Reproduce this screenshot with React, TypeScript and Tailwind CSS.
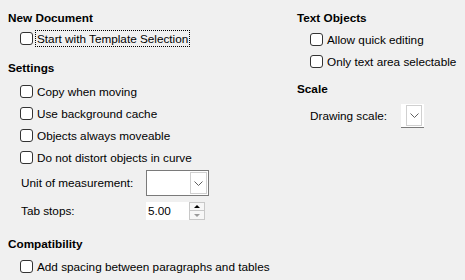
import React from "react";

const Check: React.FC<{ label: string; focus?: boolean }> = ({ label, focus }) => (
  <div className="h-[22px] flex items-center pl-[12px]">
    <span className="w-[13px] h-[13px] rounded-[3px] border border-[#333333] bg-white shrink-0" />
    <span
      className={`ml-[3px] px-[1px] leading-[15px] ${
        focus ? "outline outline-1 outline-dotted outline-black" : ""
      }`}
    >
      {label}
    </span>
  </div>
);

const Heading: React.FC<{ children: React.ReactNode }> = ({ children }) => (
  <div className="h-[19px] flex items-center font-bold">{children}</div>
);

const Chevron: React.FC = () => (
  <svg width="9" height="5" viewBox="0 0 9 5" fill="none">
    <path d="M0.5 0.5 L4.5 4.5 L8.5 0.5" stroke="#606060" strokeWidth="1" />
  </svg>
);

export default function App() {
  return (
    <div className="w-[465px] h-[280px] bg-[#f0f0f0] flex text-[11.75px] text-black font-['Liberation_Sans',_Arial,_sans-serif]">
      <div className="w-[297px] shrink-0 pl-[8px] pt-[8px] flex flex-col">
        <Heading>New Document</Heading>
        <Check label="Start with Template Selection" focus />
        <div className="h-[9px]" />
        <Heading>Settings</Heading>
        <div className="h-[3px]" />
        <Check label="Copy when moving" />
        <Check label="Use background cache" />
        <Check label="Objects always moveable" />
        <Check label="Do not distort objects in curve" />
        <div className="h-[2px]" />
        <div className="h-[26px] flex items-center pl-[13px]">
          <span className="w-[125px]">Unit of measurement:</span>
          <div className="w-[63px] h-[26px] border border-[#7a7a7a] bg-white flex items-center justify-end pr-[1px]">
            <div className="w-[17px] h-[22px] border border-[#d0d0d0] bg-white flex items-center justify-center">
              <Chevron />
            </div>
          </div>
        </div>
        <div className="h-[6px]" />
        <div className="h-[18px] flex items-center pl-[13px]">
          <span className="w-[125px]">Tab stops:</span>
          <div className="h-[18px] flex">
            <div className="w-[43px] h-[18px] bg-white flex items-center pl-[2px]">5.00</div>
            <div className="w-[16px] flex flex-col">
              <div className="h-[9px] border border-[#c8c8c8] bg-[#f7f7f7] flex items-center justify-center">
                <span className="w-0 h-0 border-l-[3px] border-r-[3px] border-b-[3px] border-l-transparent border-r-transparent border-b-black" />
              </div>
              <div className="h-[9px] border border-t-0 border-[#c8c8c8] bg-[#f7f7f7] flex items-center justify-center">
                <span className="w-0 h-0 border-l-[3px] border-r-[3px] border-t-[3px] border-l-transparent border-r-transparent border-t-[#9a9a9a]" />
              </div>
            </div>
          </div>
        </div>
        <div className="h-[14px]" />
        <Heading>Compatibility</Heading>
        <div className="h-[2px]" />
        <Check label="Add spacing between paragraphs and tables" />
      </div>
      <div className="flex-1 pt-[8px] flex flex-col">
        <Heading>Text Objects</Heading>
        <div className="h-[1px]" />
        <div className="pl-[1px]">
          <Check label="Allow quick editing" />
          <Check label="Only text area selectable" />
        </div>
        <div className="h-[7px]" />
        <Heading>Scale</Heading>
        <div className="h-[6px]" />
        <div className="h-[24px] flex items-center pl-[13px]">
          <span className="w-[91px]">Drawing scale:</span>
          <div className="w-[23px] h-[24px] bg-white border-b border-[#7a7a7a] flex items-center justify-end pr-[2px]">
            <div className="w-[16px] h-[21px] border border-[#d0d0d0] bg-white flex items-center justify-center">
              <Chevron />
            </div>
          </div>
        </div>
      </div>
    </div>
  );
}
